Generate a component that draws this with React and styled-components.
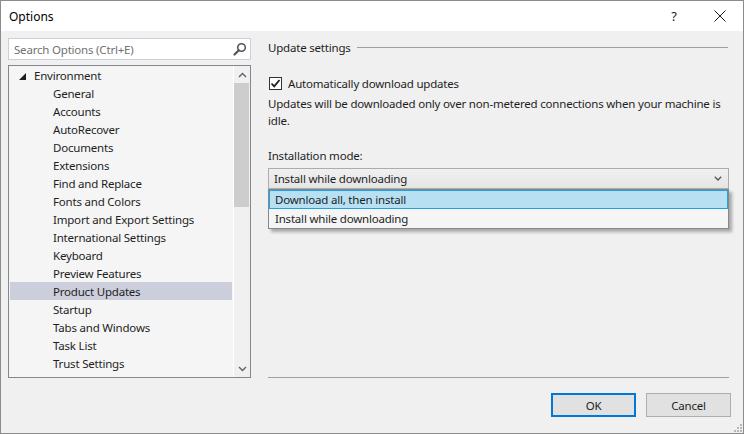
import React from 'react';
import styled, { createGlobalStyle } from 'styled-components';

const FONT = `"Noto Sans", "Open Sans", sans-serif`;

const GlobalStyle = createGlobalStyle`
  html, body {
    margin: 0;
    padding: 0;
    background: #f0f0f0;
  }
  * {
    box-sizing: border-box;
  }
`;

const treeItems = [
  'General',
  'Accounts',
  'AutoRecover',
  'Documents',
  'Extensions',
  'Find and Replace',
  'Fonts and Colors',
  'Import and Export Settings',
  'International Settings',
  'Keyboard',
  'Preview Features',
  'Product Updates',
  'Startup',
  'Tabs and Windows',
  'Task List',
  'Trust Settings',
  'Web Browser',
];

const App = () => {
  return (
    <>
      <GlobalStyle />
      <Window>
        <TitleBar>
          <Title>Options</Title>
          <TitleButtons>
            <TitleButton>?</TitleButton>
            <TitleButton>
              <svg width="12" height="12" viewBox="0 0 12 12">
                <path d="M0.5 0.5 L11.5 11.5 M11.5 0.5 L0.5 11.5" stroke="#1e1e1e" strokeWidth="1" />
              </svg>
            </TitleButton>
          </TitleButtons>
        </TitleBar>

        <Body>
          <Content>
            <LeftColumn>
              <SearchBox>
                <SearchPlaceholder>Search Options (Ctrl+E)</SearchPlaceholder>
                <svg width="14" height="14" viewBox="0 0 14 14">
                  <circle cx="8.5" cy="5.5" r="3.8" fill="none" stroke="#555" strokeWidth="1.6" />
                  <path d="M5.8 8.2 L1.5 12.5" stroke="#555" strokeWidth="2.2" strokeLinecap="round" />
                </svg>
              </SearchBox>

              <Tree>
                <TreeList>
                  <TreeRow>
                    <Expander>
                      <svg width="7" height="7" viewBox="0 0 7 7">
                        <path d="M7 0 L7 7 L0 7 Z" fill="#1e1e1e" />
                      </svg>
                    </Expander>
                    Environment
                  </TreeRow>
                  {treeItems.map(item => (
                    <TreeRow key={item} $child $selected={item === 'Product Updates'}>
                      {item}
                    </TreeRow>
                  ))}
                </TreeList>
                <ScrollBar>
                  <ScrollArrow>
                    <svg width="9" height="6" viewBox="0 0 9 6">
                      <path d="M1 5 L4.5 1.5 L8 5" fill="none" stroke="#606060" strokeWidth="1.4" />
                    </svg>
                  </ScrollArrow>
                  <ScrollTrack>
                    <ScrollThumb />
                  </ScrollTrack>
                  <ScrollArrow>
                    <svg width="9" height="6" viewBox="0 0 9 6">
                      <path d="M1 1 L4.5 4.5 L8 1" fill="none" stroke="#606060" strokeWidth="1.4" />
                    </svg>
                  </ScrollArrow>
                </ScrollBar>
              </Tree>
            </LeftColumn>

            <RightColumn>
              <GroupHeader>
                <span>Update settings</span>
                <HeaderRule />
              </GroupHeader>

              <CheckRow>
                <CheckBox>
                  <svg width="11" height="11" viewBox="0 0 11 11">
                    <path d="M1.5 5.5 L4.2 8.3 L9.5 2" fill="none" stroke="#1e1e1e" strokeWidth="1.8" />
                  </svg>
                </CheckBox>
                Automatically download updates
              </CheckRow>

              <Description>
                Updates will be downloaded only over non-metered connections when your machine is
                <br />
                idle.
              </Description>

              <FieldLabel>Installation mode:</FieldLabel>

              <ComboWrap>
                <Combo>
                  <span>Install while downloading</span>
                  <svg width="8" height="5" viewBox="0 0 8 5">
                    <path d="M0.8 0.8 L4 4 L7.2 0.8" fill="none" stroke="#555" strokeWidth="1.3" />
                  </svg>
                </Combo>
                <DropList>
                  <DropItem $active>Download all, then install</DropItem>
                  <DropItem>Install while downloading</DropItem>
                </DropList>
              </ComboWrap>
            </RightColumn>
          </Content>

          <Footer>
            <Button $default>OK</Button>
            <Button>Cancel</Button>
          </Footer>

          <Grip>
            <svg width="10" height="10" viewBox="0 0 10 10">
              <rect x="8" y="2" width="2" height="2" fill="#b8b8b8" />
              <rect x="5" y="5" width="2" height="2" fill="#b8b8b8" />
              <rect x="8" y="5" width="2" height="2" fill="#b8b8b8" />
              <rect x="2" y="8" width="2" height="2" fill="#b8b8b8" />
              <rect x="5" y="8" width="2" height="2" fill="#b8b8b8" />
              <rect x="8" y="8" width="2" height="2" fill="#b8b8b8" />
            </svg>
          </Grip>
        </Body>
      </Window>
    </>
  );
};

export default App;

const Window = styled.div`
  width: 744px;
  height: 434px;
  border: 1px solid #8c8c8c;
  background: #f0f0f0;
  display: flex;
  flex-direction: column;
  font-family: ${FONT};
  font-size: 11.5px;
  letter-spacing: -0.2px;
  color: #1e1e1e;
  overflow: hidden;
`;

const TitleBar = styled.div`
  height: 30px;
  background: #fff;
  display: flex;
  align-items: center;
  justify-content: space-between;
  padding-left: 8px;
  flex-shrink: 0;
`;

const Title = styled.div`
  font-size: 12px;
  letter-spacing: 0;
  color: #000;
`;

const TitleButtons = styled.div`
  display: flex;
  height: 100%;
`;

const TitleButton = styled.div`
  width: 46px;
  height: 100%;
  display: flex;
  align-items: center;
  justify-content: center;
  font-size: 13px;
  color: #1e1e1e;
`;

const Body = styled.div`
  position: relative;
  flex: 1;
  display: flex;
  flex-direction: column;
`;

const Content = styled.div`
  display: flex;
  gap: 17px;
  padding: 7px 13px 0 7px;
`;

const LeftColumn = styled.div`
  width: 243px;
  display: flex;
  flex-direction: column;
  gap: 5px;
`;

const SearchBox = styled.div`
  height: 22px;
  background: #fff;
  border: 1px solid #cccedb;
  display: flex;
  align-items: center;
  justify-content: space-between;
  padding: 0 3px 0 5px;
`;

const SearchPlaceholder = styled.span`
  color: #717171;
`;

const Tree = styled.div`
  height: 313px;
  border: 1px solid #828790;
  background: #f5f5f5;
  display: flex;
  overflow: hidden;
`;

const TreeList = styled.div`
  flex: 1;
  padding: 0 1px 0 1px;
  overflow: hidden;
`;

const TreeRow = styled.div`
  height: 18px;
  display: flex;
  align-items: center;
  padding-left: ${p => (p.$child ? '43px' : '9px')};
  background: ${p => (p.$selected ? '#cccedb' : 'transparent')};
  white-space: nowrap;
`;

const Expander = styled.span`
  width: 15px;
  display: flex;
  align-items: center;
  padding-top: 2px;
`;

const ScrollBar = styled.div`
  width: 17px;
  background: #f0f0f0;
  border-left: 1px solid #fff;
  display: flex;
  flex-direction: column;
`;

const ScrollArrow = styled.div`
  height: 17px;
  display: flex;
  align-items: center;
  justify-content: center;
`;

const ScrollTrack = styled.div`
  flex: 1;
`;

const ScrollThumb = styled.div`
  width: 15px;
  height: 124px;
  background: #cdcdcd;
`;

const RightColumn = styled.div`
  width: 461px;
  height: 340px;
  border-bottom: 1px solid #a0a0a0;
  display: flex;
  flex-direction: column;
`;

const GroupHeader = styled.div`
  height: 18px;
  display: flex;
  align-items: center;
  gap: 6px;
  white-space: nowrap;
`;

const HeaderRule = styled.div`
  flex: 1;
  height: 1px;
  background: #a0a0a0;
  margin-right: 1px;
`;

const CheckRow = styled.div`
  margin-top: 19px;
  display: flex;
  align-items: center;
  gap: 6px;
  padding-left: 1px;
  height: 16px;
`;

const CheckBox = styled.span`
  width: 13px;
  height: 13px;
  border: 1px solid #333;
  background: #fff;
  display: flex;
  align-items: center;
  justify-content: center;
`;

const Description = styled.div`
  margin-top: 4px;
  line-height: 17px;
  white-space: nowrap;
`;

const FieldLabel = styled.div`
  margin-top: 18px;
  line-height: 17px;
`;

const ComboWrap = styled.div`
  position: relative;
  margin-top: 4px;
`;

const Combo = styled.div`
  height: 21px;
  border: 1px solid #acacac;
  background: linear-gradient(#f0f0f0, #e5e5e5);
  display: flex;
  align-items: center;
  justify-content: space-between;
  padding: 0 6px 0 5px;
`;

const DropList = styled.div`
  position: absolute;
  top: 21px;
  left: 0;
  width: 461px;
  border: 1px solid #828790;
  background: #f5f5f5;
  box-shadow: 3px 3px 3px rgba(0, 0, 0, 0.3);
  z-index: 2;
`;

const DropItem = styled.div`
  height: 19px;
  display: flex;
  align-items: center;
  padding-left: 5px;
  background: ${p => (p.$active ? '#b7e0f3' : '#f5f5f5')};
  border: 1px solid ${p => (p.$active ? '#26a0da' : 'transparent')};
`;

const Footer = styled.div`
  display: flex;
  justify-content: flex-end;
  gap: 10px;
  padding: 15px 12px 0 0;
`;

const Button = styled.div`
  width: 85px;
  height: 24px;
  display: flex;
  align-items: center;
  justify-content: center;
  background: #e1e1e1;
  border: ${p => (p.$default ? '2px solid #0078d7' : '1px solid #adadad')};
  color: #1e1e1e;
`;

const Grip = styled.div`
  position: absolute;
  right: 1px;
  bottom: 1px;
  display: flex;
`;
